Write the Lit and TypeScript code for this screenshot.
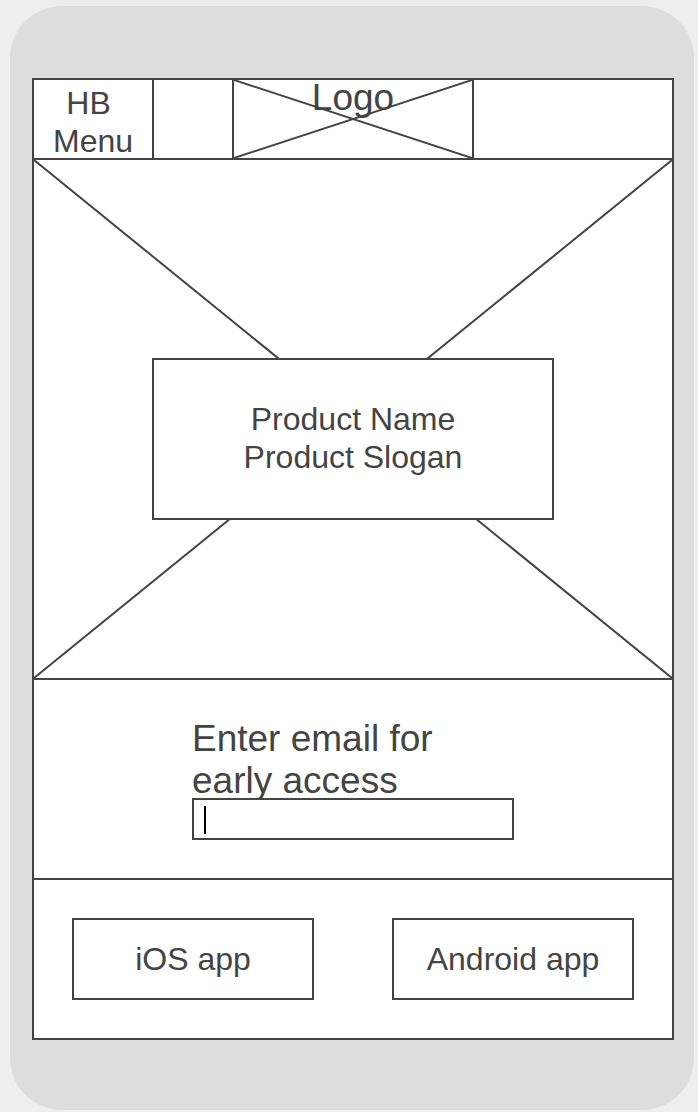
import { LitElement, html, css } from "lit";
import { customElement } from "lit/decorators.js";

// Placeholder box: two diagonals stretched over whatever size the parent has.
@customElement("cross-lines")
class CrossLines extends LitElement {
  static styles = css`
    :host {
      position: absolute;
      inset: 0;
      pointer-events: none;
    }
    .lines {
      display: block;
      width: 100%;
      height: 100%;
    }
    .stroke {
      stroke: #444;
      stroke-width: 2px;
      vector-effect: non-scaling-stroke;
    }
  `;

  render() {
    return html`
      <svg class="lines" viewBox="0 0 100 100" preserveAspectRatio="none" aria-hidden="true">
        <line class="stroke" x1="0" y1="0" x2="100" y2="100"></line>
        <line class="stroke" x1="0" y1="100" x2="100" y2="0"></line>
      </svg>
    `;
  }
}

@customElement("app-root")
class AppRoot extends LitElement {
  static styles = css`
    :host {
      display: block;
      box-sizing: border-box;
      min-height: 100vh;
      padding: 6px 4px 2px 10px;
      background: #eee;
      color: #444;
      font-family: "Liberation Sans", Arial, sans-serif;
      font-size: 32px;
      line-height: 38px;
    }
    * {
      box-sizing: border-box;
    }
    button,
    input {
      margin: 0;
      padding: 0;
      border: 0;
      border-radius: 0;
      background: #fff;
      color: inherit;
      font: inherit;
    }
    .phone {
      padding: 72px 20px 70px 22px;
      border-radius: 52px;
      background: #ddd;
    }
    .screen {
      border: 2px solid #444;
      background: #fff;
    }
    .header {
      display: grid;
      grid-template-columns: 1fr 242px 1fr;
      height: 80px;
      border-bottom: 2px solid #444;
    }
    .menu {
      display: flex;
      justify-content: center;
      align-items: flex-start;
      width: 120px;
      height: 78px;
      padding-top: 4px;
      border-right: 2px solid #444;
    }
    .logo {
      position: relative;
      border: solid #444;
      border-width: 0 2px;
      font-size: 37px;
      line-height: 36px;
      text-align: center;
    }
    .hero {
      position: relative;
      display: flex;
      justify-content: center;
      padding: 198px 20px 158px;
      border-bottom: 2px solid #444;
    }
    .card {
      position: relative;
      width: 402px;
      padding: 40px 0 42px;
      border: 2px solid #444;
      background: #fff;
      text-align: center;
    }
    .title,
    .slogan {
      margin: 0;
      font-size: 32px;
      font-weight: 400;
    }
    .signup {
      display: flex;
      justify-content: center;
      padding: 38px 20px;
      border-bottom: 2px solid #444;
    }
    .form {
      width: 322px;
    }
    .label {
      display: block;
      font-size: 37px;
      line-height: 42px;
    }
    .field {
      position: relative;
      margin-top: -4px;
    }
    .email {
      display: block;
      width: 100%;
      height: 42px;
      padding: 0 10px;
      border: 2px solid #444;
      outline: none;
    }
    .caret {
      position: absolute;
      left: 12px;
      top: 8px;
      width: 2px;
      height: 28px;
      background: #000;
      pointer-events: none;
    }
    .apps {
      display: grid;
      grid-template-columns: 1fr 1fr;
      gap: 78px;
      padding: 38px;
    }
    .app {
      height: 82px;
      border: 2px solid #444;
    }
  `;

  render() {
    return html`
      <div class="phone">
        <div class="screen">
          <header class="header">
            <div><button class="menu" type="button"><span>HB&nbsp;<br />Menu</span></button></div>
            <div class="logo"><cross-lines></cross-lines>Logo</div>
          </header>
          <section class="hero">
            <cross-lines></cross-lines>
            <div class="card">
              <h1 class="title">Product Name</h1>
              <p class="slogan">Product Slogan</p>
            </div>
          </section>
          <section class="signup">
            <form class="form">
              <label class="label" for="email">Enter email for<br />early access</label>
              <div class="field">
                <input class="email" id="email" type="email" />
                <span class="caret"></span>
              </div>
            </form>
          </section>
          <section class="apps">
            <button class="app" type="button">iOS app</button>
            <button class="app" type="button">Android app</button>
          </section>
        </div>
      </div>
    `;
  }
}
